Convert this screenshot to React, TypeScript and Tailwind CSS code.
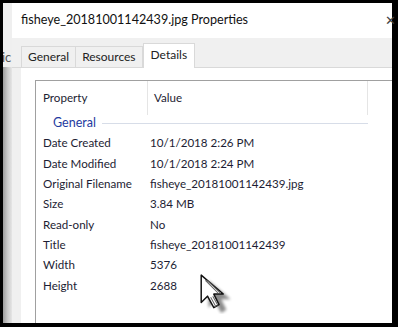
import React from 'react';

const rows: [string, string][] = [
  ['Date Created', '10/1/2018 2:26 PM'],
  ['Date Modified', '10/1/2018 2:24 PM'],
  ['Original Filename', 'fisheye_20181001142439.jpg'],
  ['Size', '3.84 MB'],
  ['Read-only', 'No'],
  ['Title', 'fisheye_20181001142439'],
  ['Width', '5376'],
  ['Height', '2688'],
];

const Cursor = () => (
  <svg width="42" height="42" viewBox="0 0 40 40" className="absolute left-[197px] top-[272px]">
    <defs>
      <filter id="blur" x="-20%" y="-20%" width="140%" height="140%">
        <feGaussianBlur stdDeviation="1.5" />
      </filter>
    </defs>
    <path d="M6 6 L6 32 L12 26 L18 37 L23 34 L18 24 L27 24 Z" fill="#000" opacity="0.45" filter="url(#blur)" transform="translate(5 2)" />
    <path d="M4 3 L4 29 L10 23 L16 34 L21 31 L16 21 L25 21 Z" fill="#fff" stroke="#111" strokeWidth="1.4" strokeLinejoin="round" />
    <path d="M8 8 L20 20 M10 8 L22 20 M13 24 L18 33 M15 23 L20 32" stroke="#666" strokeWidth="1" />
  </svg>
);

export default function App() {
  return (
    <div className="relative w-[398px] h-[327px] bg-black pt-[3px] pl-[3px] pr-[6px] pb-[4px] flex overflow-hidden" style={{ fontFamily: 'Lato, "Noto Sans", sans-serif' }}>
      {/* window behind */}
      <div className="w-[9px] flex flex-col bg-gradient-to-r from-[#9c9c9c] via-[#c8c8c8] to-[#e6e6e6] overflow-hidden">
        <div className="h-[44px] bg-[#efefef]" />
        <div className="h-[20px] bg-[#efefef] text-[13px] text-[#555] leading-[20px] -ml-[1px]">ic</div>
        <div className="flex-1" />
      </div>
      <div className="flex-1 flex flex-col bg-white">
        <div className="h-[35px] flex items-center justify-between pl-[9px] text-[12.6px] text-[#111]">
          <span>fisheye_20181001142439.jpg Properties</span>
          <span className="text-[13px] text-[#444] -mr-[4px]">✕</span>
        </div>
        <div className="h-[30px] bg-[#f0f0f0] flex items-end pl-[9px] border-b border-[#d9d9d9] text-[12px] text-[#222]">
          <div className="h-[21px] px-[6px] border border-b-0 border-[#d9d9d9] bg-[#f0f0f0] flex items-center">General</div>
          <div className="h-[21px] px-[6px] border border-b-0 border-l-0 border-[#d9d9d9] bg-[#f0f0f0] flex items-center">Resources</div>
          <div className="h-[25px] px-[7px] border border-b-0 border-[#d9d9d9] bg-white -mb-px flex items-start pt-[2px]">Details</div>
        </div>
        <div className="flex-1 flex bg-[#f0f0f0]">
          <div className="ml-[9px] flex-1 bg-white pt-[12px] pl-[14px] flex">
            <div className="flex-1 border-l border-t border-[#a0a0a0] text-[11.6px] text-[#1d1d33] relative">
              <div className="h-[34px] flex items-center">
                <div className="w-[112px] pl-[7px] h-[34px] flex items-center border-r border-[#e5e5e5]">Property</div>
                <div className="w-[220px] pl-[6px] h-[34px] flex items-center border-r border-[#e5e5e5]">Value</div>
              </div>
              <div className="h-[17px] flex items-center pl-[17px] pr-[24px] gap-[6px]">
                <span className="text-[#1e3aa0] text-[12.5px]">General</span>
                <div className="flex-1 h-px bg-[#d7dde8]" />
              </div>
              <div className="pt-[1px]">
                {rows.map(([k, v]) => (
                  <div key={k} className="h-[20.3px] flex items-center">
                    <div className="w-[114px] pl-[7px] whitespace-nowrap">{k}</div>
                    <div className="whitespace-nowrap">{v}</div>
                  </div>
                ))}
              </div>
            </div>
          </div>
        </div>
      </div>
      <Cursor />
    </div>
  );
}
